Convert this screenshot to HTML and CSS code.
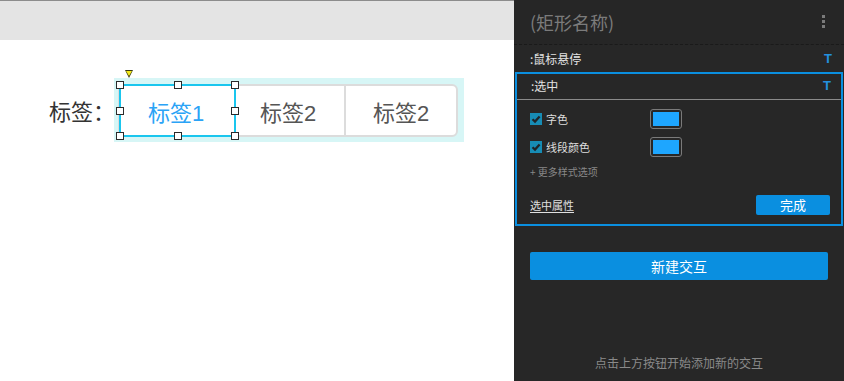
FILE: index.html
```html
<!DOCTYPE html>
<html lang="zh">
<head>
<meta charset="utf-8">
<link rel="stylesheet" href="styles.css">
</head>
<body>
<div class="app">
  <div class="stage">
    <div class="topbar"></div>
    <div class="canvas">
      <div class="field">
        <span class="field-label">标签：</span>
        <div class="selection">
          <div class="tabs">
            <div class="tab tab-active">标签1
              <span class="marker"></span>
              <span class="h h-tl"></span><span class="h h-tm"></span><span class="h h-tr"></span>
              <span class="h h-ml"></span><span class="h h-mr"></span>
              <span class="h h-bl"></span><span class="h h-bm"></span><span class="h h-br"></span>
            </div>
            <div class="tab tab-2">标签2</div>
            <div class="tab tab-3">标签2</div>
          </div>
        </div>
      </div>
    </div>
  </div>
  <aside class="panel">
    <div class="panel-head">
      <span class="panel-title">(矩形名称)</span>
      <span class="more"><i></i><i></i><i></i></span>
    </div>
    <div class="state-row"><span>:鼠标悬停</span><b class="t-icon">T</b></div>
    <div class="state-block">
      <div class="state-row inner"><span>:选中</span><b class="t-icon">T</b></div>
      <div class="state-body">
        <div class="opt-row">
          <label class="opt"><span class="check"><svg viewBox="0 0 12 12"><path d="M2.5 6.2 L5 8.6 L9.6 3.4" fill="none" stroke="#1f2428" stroke-width="2.2"/></svg></span>字色</label>
          <span class="swatch"><span></span></span>
        </div>
        <div class="opt-row">
          <label class="opt"><span class="check"><svg viewBox="0 0 12 12"><path d="M2.5 6.2 L5 8.6 L9.6 3.4" fill="none" stroke="#1f2428" stroke-width="2.2"/></svg></span>线段颜色</label>
          <span class="swatch"><span></span></span>
        </div>
        <div class="more-opts">+ 更多样式选项</div>
        <div class="foot-row">
          <span class="prop-link">选中属性</span>
          <button class="btn btn-done">完成</button>
        </div>
      </div>
    </div>
    <button class="btn btn-new">新建交互</button>
    <div class="hint">点击上方按钮开始添加新的交互</div>
  </aside>
</div>
</body>
</html>
```

FILE: styles.css
```css
* { box-sizing: border-box; }
html, body { margin: 0; padding: 0; }
body {
  width: 844px;
  height: 381px;
  overflow: hidden;
  font-family: "Liberation Sans", "Noto Sans CJK SC", sans-serif;
  background: #fff;
}
.app {
  display: flex;
  height: 381px;
}
.stage {
  width: 514px;
  display: flex;
  flex-direction: column;
  background: #fff;
}
.topbar {
  height: 40px;
  background: #e4e4e4;
  border-top: 1px solid #8c8c8c;
}
.canvas {
  flex: 1;
  padding-top: 38px;
}
.field {
  display: flex;
  align-items: center;
  padding-left: 49px;
}
.field-label {
  font-size: 22px;
  color: #333;
  width: 65px;
  white-space: nowrap;
}
.selection {
  background: #d7f6f6;
  padding: 6px 6px 5px 4px;
}
.tabs {
  display: flex;
  width: 340px;
  height: 53px;
  border: 2px solid #dcdcdc;
  border-radius: 6px;
  background: #fff;
}
.tab {
  display: flex;
  align-items: center;
  justify-content: center;
  font-size: 22px;
  color: #555;
}
.tab-active {
  position: relative;
  width: 117px;
  margin: -2px 0 -2px -1px;
  border: 2px solid #1ac6ee;
  border-radius: 3px;
  color: #2aa3f6;
  padding-right: 3px;
}
.tab-2 {
  width: 110px;
  border-right: 2px solid #dcdcdc;
  padding-right: 4px;
}
.tab-3 { flex: 1; }
.h {
  position: absolute;
  width: 8px;
  height: 8px;
  background: #fff;
  border: 1px solid #2a2a2a;
}
.h-tl, .h-tm, .h-tr { top: -5px; }
.h-ml, .h-mr { top: calc(50% - 4px); }
.h-bl, .h-bm, .h-br { bottom: -5px; }
.h-tl, .h-ml, .h-bl { left: -5px; }
.h-tm, .h-bm { left: calc(50% - 4px); }
.h-tr, .h-mr, .h-br { right: -5px; }
.marker {
  position: absolute;
  left: 4px;
  top: -16px;
  width: 0;
  height: 0;
  border-left: 4.5px solid transparent;
  border-right: 4.5px solid transparent;
  border-top: 8px solid #3a3a10;
}
.marker::after {
  content: "";
  position: absolute;
  left: -3px;
  top: -7px;
  border-left: 3px solid transparent;
  border-right: 3px solid transparent;
  border-top: 5px solid #f4ea1c;
}

/* panel */
.panel {
  width: 330px;
  background: #272727;
  display: flex;
  flex-direction: column;
  font-family: "Noto Sans CJK SC", "Liberation Sans", sans-serif;
}
.panel-head {
  height: 45px;
  display: flex;
  align-items: center;
  justify-content: space-between;
  padding: 0 19px 0 16px;
  border-bottom: 1px dashed #1a1a1a;
  background: #262626;
}
.panel-title {
  font-size: 18px;
  color: #7b7b7b;
}
.more {
  display: flex;
  flex-direction: column;
  gap: 2px;
  margin-top: -1px;
}
.more i {
  display: block;
  width: 3px;
  height: 3px;
  background: #7a7a7a;
}
.state-row {
  height: 27px;
  display: flex;
  align-items: center;
  justify-content: space-between;
  padding: 0 12px 1px 16px;
  font-size: 12px;
  color: #e2e2e2;
}
.t-icon {
  font-family: "Liberation Sans", sans-serif;
  font-size: 13px;
  font-weight: bold;
  color: #2390de;
}
.state-block {
  margin: 0 1px;
  border: 2px solid #0a8fe0;
}
.state-row.inner {
  height: 26px;
  padding: 0 10px 2px 14px;
  border-bottom: 1px solid #8a8a8a;
}
.state-body {
  padding: 9px 11px 9px 13px;
}
.opt-row {
  display: flex;
  align-items: center;
  height: 20px;
  margin-bottom: 8px;
}
.opt {
  display: flex;
  align-items: center;
  gap: 4px;
  width: 120px;
  font-size: 11px;
  color: #dedede;
}
.check {
  display: block;
  width: 12px;
  height: 12px;
  background: #178cb5;
}
.check svg { display: block; width: 12px; height: 12px; }
.swatch {
  display: block;
  width: 32px;
  height: 20px;
  padding: 2px;
  border: 1px solid #7a7a7a;
  border-radius: 3px;
}
.swatch span {
  display: block;
  width: 100%;
  height: 100%;
  background: #1ea6ff;
}
.more-opts {
  font-size: 10px;
  color: #878787;
  height: 14px;
  line-height: 14px;
  margin-top: 1px;
}
.foot-row {
  display: flex;
  align-items: center;
  justify-content: space-between;
  margin-top: 16px;
  height: 20px;
}
.prop-link {
  font-size: 11px;
  color: #e0e0e0;
  text-decoration: underline;
  text-underline-offset: 2px;
}
.btn {
  border: none;
  background: #0a8fe0;
  color: #fff;
  font-family: "Noto Sans CJK SC", "Liberation Sans", sans-serif;
  padding: 0;
  border-radius: 2px;
}
.btn-done {
  width: 74px;
  height: 20px;
  font-size: 13px;
  line-height: 20px;
}
.btn-new {
  margin: 26px 16px 0 16px;
  height: 28px;
  font-size: 14px;
}
.hint {
  margin-top: 74px;
  text-align: center;
  font-size: 12px;
  color: #8a8a8a;
}
```
